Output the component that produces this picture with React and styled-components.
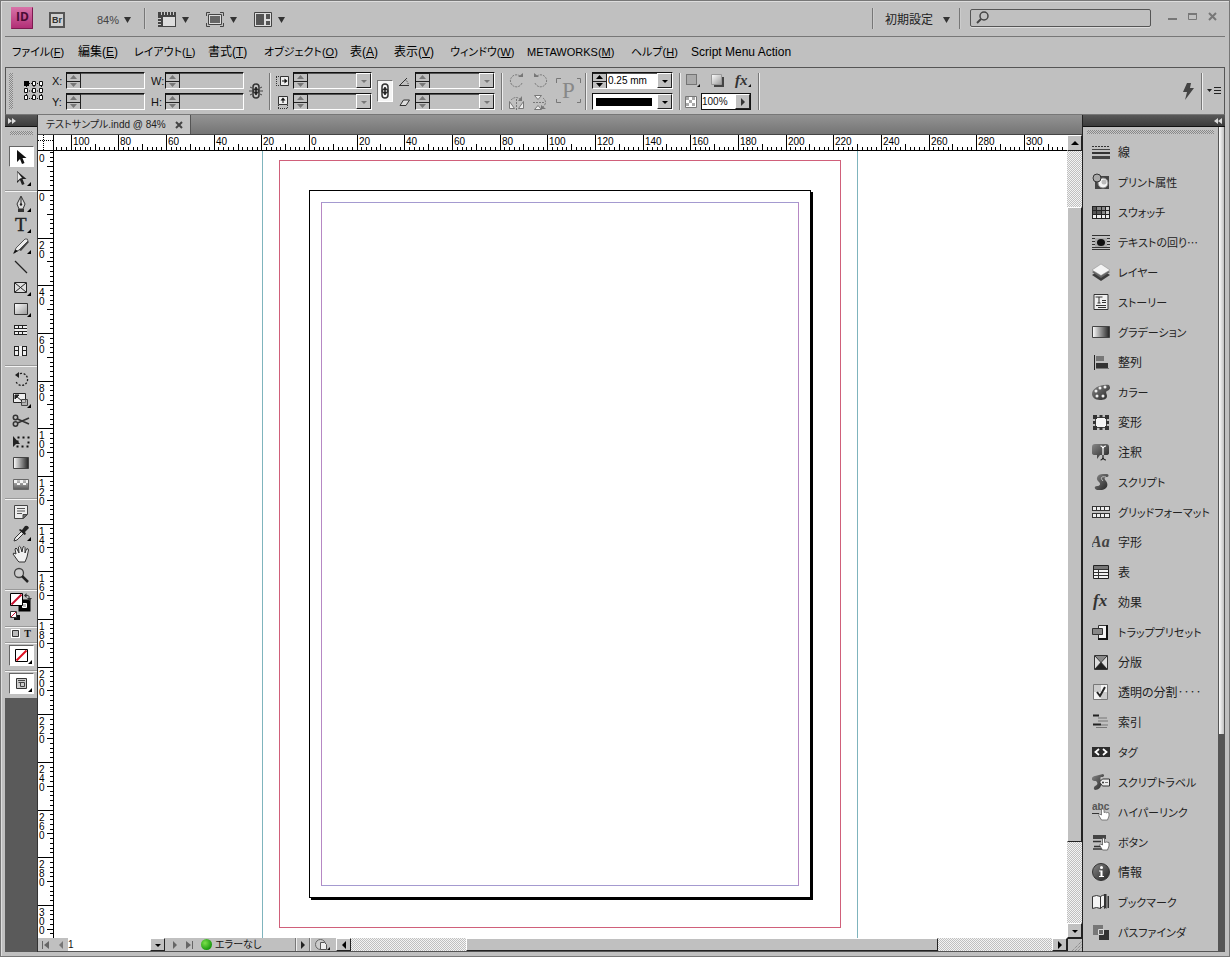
import React, { useEffect, useState } from "react";
import styled, { createGlobalStyle, css } from "styled-components";

// pixels per millimetre at 84% zoom
const SCALE = 2.383;

const menus = [
  { label: "ファイル", hotkey: "F", small: true },
  { label: "編集", hotkey: "E" },
  { label: "レイアウト", hotkey: "L", small: true },
  { label: "書式", hotkey: "T" },
  { label: "オブジェクト", hotkey: "O", small: true },
  { label: "表", hotkey: "A" },
  { label: "表示", hotkey: "V" },
  { label: "ウィンドウ", hotkey: "W", small: true },
  { label: "METAWORKS", hotkey: "M", small: true },
  { label: "ヘルプ", hotkey: "H", small: true },
  { label: "Script Menu Action" },
];

const panelIcons = {
  stroke: (
    <>
      <path d="M0 3.500h18" stroke="#333" strokeDasharray="2 1" />
      <path d="M0 6.500h18" stroke="#444" />
      <path d="M0 10h18" stroke="#333" strokeWidth="2" />
      <path d="M0 14.500h18" stroke="#444" strokeWidth="3" />
    </>
  ),
  print: (
    <>
      <path d="M3 3h14v13H3z" fill="#444" />
      <circle cx="11" cy="10" r="5" fill="#f4f4f4" stroke="#888" />
      <circle cx="12" cy="9" r="2.500" fill="#bbb" />
      <circle cx="5" cy="5" r="4" fill="#aaa" stroke="#333" />
    </>
  ),
  swatch: (
    <>
      <path d="M0 3h18v13H0z" fill="#222" />
      <path d="M1 4h3v3H1zM1 8h3v3H1zM5 8h4v3H5z" fill="#555" />
      <path d="M5 4h4v3H5zM10 4h3v3h-3zM10 8h3v3h-3z" fill="#888" />
      <path d="M14 4h3v3h-3zM14 8h3v3h-3z" fill="#ccc" />
      <path d="M1 12h3v3H1zM5 12h4v3H5zM10 12h3v3h-3zM14 12h3v3h-3z" fill="#eee" />
    </>
  ),
  wrap: (
    <>
      <path
        d="M0 2.500h18M0 5.500h18M0 8.500h3M15 8.500h3M0 11.500h3M15 11.500h3M0 14.500h18M0 16.500h18"
        stroke="#333"
      />
      <path d="M3 5h12v9H3z" fill="#aaa" />
      <ellipse cx="9" cy="9.500" rx="4" ry="3.500" fill="#111" />
    </>
  ),
  layers: (
    <>
      <path d="M9 6l9 6-9 6-9-6z" fill="#3c3c3c" />
      <path d="M9 4l9 5-9 6-9-6z" fill="#666" />
      <path d="M9 1l9 6-9 5.500L0 7z" fill="#f4f4f4" stroke="#888" strokeWidth=".5" />
    </>
  ),
  story: (
    <>
      <path d="M2 1.500h14v15H2z" fill="#f0f0f0" stroke="#333" />
      <path d="M3.500 4h7M7 4v6M5.500 10h3M10 7.500h4M10 9.500h4M4 12.500h10M6 14.500h8" stroke="#333" />
    </>
  ),
  gradient: <path d="M.5 3.500h17v11H.5z" fill="url(#grayRamp)" stroke="#444" />,
  align: (
    <>
      <path d="M2.500 2v15" stroke="#222" />
      <path d="M4 3h8v5H4z" fill="#777" />
      <path d="M4 10h12v5H4z" fill="#333" />
      <path d="M4 15.500h13" stroke="#777" />
    </>
  ),
  color: (
    <>
      <path
        d="M17 2c2 3 1 5-2 6-2 1 0 3 0 5 0 3-3 4-7 4-5 0-8-3-8-6 0-6 9-10 17-9z"
        fill="url(#darkBall)"
      />
      <g fill="#eee">
        <circle cx="4" cy="8" r="1.500" />
        <circle cx="8" cy="5" r="1.500" />
        <circle cx="13" cy="4" r="1.500" />
        <circle cx="5" cy="13" r="1.500" />
        <circle cx="11" cy="13" r="1.500" />
      </g>
    </>
  ),
  transform: (
    <>
      <path d="M3.500 4.500h11v10h-11z" fill="#f4f4f4" stroke="#444" />
      <path
        d="M1 2h4v4H1zM13 2h4v4h-4zM1 13h4v4H1zM13 13h4v4h-4zM7.500 2h3v3h-3zM7.500 14h3v3h-3zM1 8h3v3H1zM14 8h3v3h-3z"
        fill="#333"
      />
    </>
  ),
  note: (
    <>
      <path d="M3 1h11q3 0 3 3v6q0 2-3 2H8l-3 4V12H3q-3 0-3-2V4q0-3 3-3z" fill="url(#darkBall)" />
      <path d="M8.500 3q2 0 2.500 2.500Q11.500 3 14 3M11 5v7" stroke="#fff" strokeWidth="1.200" fill="none" />
      <path d="M11 12v3M8.500 17q2 0 2.500-2.500 .5 2.500 3 2.500" stroke="#222" strokeWidth="1.200" fill="none" />
    </>
  ),
  script: (
    <>
      <path
        d="M15 1c2 0 2 3 0 3-3 0-3 2-1 4 3 4 1 8-4 9H5c-3-1-3-4 0-4 3 0 4-2 2-4-4-3-2-8 4-8z"
        fill="url(#darkBall)"
      />
      <path d="M14 4c-5-1-6 1-3 4" stroke="#bbb" fill="none" />
    </>
  ),
  grid: (
    <>
      <path d="M0 3h18v5H0zM0 10h18v5H0z" fill="#333" />
      <path
        d="M1 4h3v3H1zM5 4h3v3H5zM9 4h3v3H9zM13 4h4v3h-4zM1 11h3v3H1zM5 11h3v3H5zM9 11h3v3H9zM13 11h4v3h-4z"
        fill="#eee"
      />
    </>
  ),
  glyph: (
    <text x="-1" y="14" fontSize="16" fontFamily="Liberation Serif, serif" fontStyle="italic" fontWeight="bold" fill="#444">
      Aa
    </text>
  ),
  table: (
    <>
      <path d="M1.500 2.500h15v13h-15z" fill="#f4f4f4" stroke="#222" />
      <path d="M2 3h14v3H2z" fill="#777" />
      <path d="M2 6.500h14M2 9.500h14M2 12.500h14M6.500 6v9" stroke="#333" />
    </>
  ),
  fx: (
    <text x="1" y="13" fontSize="17" fontFamily="Liberation Serif, serif" fontStyle="italic" fontWeight="bold" fill="#333">
      fx
    </text>
  ),
  trap: (
    <>
      <path d="M6.500 2.500h9v13h-9z" fill="#f4f4f4" stroke="#333" />
      <path d="M15 2v14H6" stroke="#111" strokeWidth="2" fill="none" />
      <path d="M.5 5.500h10v6H.5z" fill="#888" stroke="#333" />
    </>
  ),
  separation: (
    <>
      <path d="M2.500 2.500h13v14h-13z" fill="#ddd" />
      <path d="M3 3h12L9 9z" fill="#888" />
      <path d="M3 16h12L9 9z" fill="#222" />
      <path d="M2.500 2.500h13v14h-13zM3 3l12 13M15 3L3 16" stroke="#333" fill="none" />
    </>
  ),
  flatten: (
    <>
      <path d="M1.500 1.500h14v15h-14z" fill="#f4f4f4" stroke="#777" />
      <path d="M2 2h7v7H2zM9 9h6v7H9z" fill="#ccc" />
      <path d="M5 9l3 4 5-9" stroke="#222" strokeWidth="2" fill="none" />
    </>
  ),
  index: (
    <>
      <path d="M1 2.500h6M1 11.500h8" stroke="#222" strokeWidth="2" />
      <path d="M6 5h9M6 8h10M9 12h7M4 14.500h11" stroke="#777" />
    </>
  ),
  tag: (
    <>
      <path d="M0 4h18v10H0z" fill="#2c2c2c" />
      <path d="M7 6L3.500 9 7 12M11 6l3.500 3L11 12" stroke="#fff" strokeWidth="1.800" fill="none" />
    </>
  ),
  scriptLabel: (
    <>
      <path d="M11 1c2 1 1 3-1 3-3 0-1 3-1 5 1 5-2 8-6 8-2-1-1-3 0-4 3-1 3-3 1-5-6 0-5-4-1-5z" fill="url(#darkBall)" />
      <path d="M7.500 9l3-3h7v7h-7z" fill="#eee" stroke="#333" />
      <circle cx="11" cy="9.500" r="1" fill="#333" />
      <path d="M13 9.500h3" stroke="#777" />
    </>
  ),
  hyperlink: (
    <>
      <text x="0" y="7" fontSize="10" fontFamily="Liberation Sans, sans-serif" fontWeight="bold" fill="#555">
        abc
      </text>
      <path d="M0 10.500h7" stroke="#333" />
      <path
        d="M9.500 6v6l-2-1-1 1 3 5h6l1.500-4V10l-1.500-.5-1 .5-1-1-1.500.5V6z"
        fill="#fff"
        stroke="#666"
        strokeWidth=".8"
      />
    </>
  ),
  button: (
    <>
      <path d="M1 2h13v4H1z" fill="#444" />
      <path d="M1 8.500h8M2 13.500h7M1 16h9" stroke="#333" strokeWidth="1.500" />
      <path
        d="M10.500 5v7l-2-1-1 1 3 5h5l1.500-4V9.500L14.500 9l-2 .5V5z"
        fill="#fff"
        stroke="#555"
        strokeWidth=".8"
      />
    </>
  ),
  info: (
    <>
      <circle cx="9" cy="9" r="8.500" fill="url(#darkBall)" stroke="#333" />
      <circle cx="9.500" cy="4.500" r="1.500" fill="#fff" />
      <path d="M7 7.500h3.500V13H12v1H7v-1h1.500V8.500H7z" fill="#fff" />
    </>
  ),
  bookmark: (
    <>
      <path d="M.5 3.500q4-2 8 0v12q-4-2-8 0z" fill="#f4f4f4" stroke="#333" />
      <path d="M8.500 3.500q2-1.500 4-1.500v11q-2 0-4 2.500z" fill="#f4f4f4" stroke="#333" />
      <path d="M12 1h2.500v15l-1-1-1.500 1zM15.500 3H17v12h-1.500z" fill="#333" />
    </>
  ),
  pathfinder: (
    <>
      <path d="M1 2h10v10H1z" fill="#777" />
      <path d="M7 7h10v10H7z" fill="#333" />
      <path d="M6.500 6.500h5v5h-5z" fill="#666" stroke="#ddd" />
    </>
  ),
};

const panels = [
  { icon: "stroke", label: "線" },
  { icon: "print", label: "プリント属性", small: true },
  { icon: "swatch", label: "スウォッチ", small: true },
  { icon: "wrap", label: "テキストの回り…", small: true },
  { icon: "layers", label: "レイヤー", small: true },
  { icon: "story", label: "ストーリー", small: true },
  { icon: "gradient", label: "グラデーション", small: true },
  { icon: "align", label: "整列" },
  { icon: "color", label: "カラー", small: true },
  { icon: "transform", label: "変形" },
  { icon: "note", label: "注釈" },
  { icon: "script", label: "スクリプト", small: true },
  { icon: "grid", label: "グリッドフォーマット", small: true },
  { icon: "glyph", label: "字形" },
  { icon: "table", label: "表" },
  { icon: "fx", label: "効果" },
  { icon: "trap", label: "トラッププリセット", small: true },
  { icon: "separation", label: "分版" },
  { icon: "flatten", label: "透明の分割‥‥" },
  { icon: "index", label: "索引" },
  { icon: "tag", label: "タグ", small: true },
  { icon: "scriptLabel", label: "スクリプトラベル", small: true },
  { icon: "hyperlink", label: "ハイパーリンク", small: true },
  { icon: "button", label: "ボタン", small: true },
  { icon: "info", label: "情報" },
  { icon: "bookmark", label: "ブックマーク", small: true },
  { icon: "pathfinder", label: "パスファインダ", small: true },
];

const toolGroups = [
  [
    {
      name: "選択",
      active: true,
      icon: <path d="M5 2v12l3-3 2 5 2.500-1-2-5h4z" fill="#111" />,
    },
    {
      name: "ダイレクト選択",
      more: true,
      icon: (
        <>
          <path d="M5 2v12l3-3 2 5 2.500-1-2-5h4z" fill="#222" />
          <path d="M5.500 3v9L8 9.500l2-.5z" fill="#eee" />
        </>
      ),
    },
  ],
  [
    {
      name: "ペン",
      more: true,
      icon: (
        <>
          <path d="M9 1L5 9l2 5h4l2-5z" fill="#ddd" stroke="#333" />
          <path d="M9 2v7" stroke="#222" />
          <circle cx="9" cy="9.500" r="1.200" fill="#222" />
          <path d="M6 14h6v3H6z" fill="#333" />
        </>
      ),
    },
    {
      name: "文字",
      more: true,
      icon: (
        <text x="3" y="15" fontSize="19" fontFamily="Liberation Serif, serif" fill="#222" stroke="#222" strokeWidth=".4">
          T
        </text>
      ),
    },
    {
      name: "鉛筆",
      more: true,
      icon: (
        <>
          <path d="M2 16l2-5L13 2q3-1 3 2L7 13z" fill="#eee" stroke="#555" />
          <path d="M7 13L16 4l1 1-8 9z" fill="#444" />
          <path d="M1 17l2.500-4.500L6 14z" fill="#111" />
        </>
      ),
    },
    { name: "線", icon: <path d="M3 3l12 12" stroke="#222" strokeWidth="1.300" /> },
    {
      name: "長方形フレーム",
      more: true,
      icon: (
        <>
          <path d="M2.500 3.500h12v10h-12z" fill="#ddd" stroke="#222" />
          <path d="M3 4l11 9M14 4L3 13" stroke="#222" />
        </>
      ),
    },
    {
      name: "長方形",
      more: true,
      icon: <path d="M2.500 3.500h13v11h-13z" fill="url(#lightRamp)" stroke="#333" />,
    },
    {
      name: "横組みグリッド",
      icon: (
        <>
          <path d="M3 4h12v10H3z" fill="#eee" />
          <path
            d="M2 4.500h13M2 7.500h13M2 10.500h13M2 13.500h13M2.500 4v4M2.500 10v4M6.500 4v4M10.500 4v4M6.500 10v4M10.500 10v4"
            stroke="#222"
          />
        </>
      ),
    },
    {
      name: "縦組みグリッド",
      icon: (
        <>
          <path d="M2 4h13v10H2z" fill="#eee" />
          <path
            d="M2.500 4v10M6.500 4v10M10.500 4v10M14.500 4v10M2 4.500h5M10 4.500h5M2 8.500h5M10 8.500h5M2 13.500h5M10 13.500h5"
            stroke="#222"
          />
        </>
      ),
    },
  ],
  [
    {
      name: "回転",
      icon: (
        <>
          <path d="M5 5.500a6 6 0 1 1-1 6" stroke="#222" strokeWidth="1.300" strokeDasharray="2 1.500" fill="none" />
          <path d="M7 2L3 5l4 3z" fill="#222" />
        </>
      ),
    },
    {
      name: "拡大・縮小",
      more: true,
      icon: (
        <>
          <path d="M1.500 2.500h12v9h-12z" fill="#eee" stroke="#222" />
          <path d="M9.500 8.500h6v6h-6z" fill="#aaa" fillOpacity=".6" stroke="#444" />
          <path d="M3 4h4L3 8zM4 5l6 5" fill="#222" stroke="#222" />
        </>
      ),
    },
    {
      name: "はさみ",
      icon: (
        <g fill="none" stroke="#333">
          <circle cx="3.500" cy="5.500" r="2.200" strokeWidth="1.500" />
          <circle cx="3.500" cy="12" r="2.200" strokeWidth="1.500" />
          <path d="M5.500 7L17 12M5.500 11L17 6" strokeWidth="1.600" />
        </g>
      ),
    },
    {
      name: "自由変形",
      icon: (
        <>
          <path d="M5.500 4.500h11v9h-11z" fill="none" stroke="#111" strokeWidth="2" strokeDasharray="2 3" />
          <path d="M1 3v11l3-3h4z" fill="#222" />
        </>
      ),
    },
    { name: "グラデーション", icon: <path d="M1.500 3.500h15v11h-15z" fill="url(#grayRamp)" stroke="#444" /> },
    {
      name: "グラデーションぼかし",
      icon: (
        <>
          <path d="M1.500 4.500h15v10h-15z" fill="url(#downRamp)" stroke="#666" />
          <path d="M2 5h3v3H2zM8 5h3v3H8zM14 5h2v3h-2zM5 8h3v2H5zM11 8h3v2h-3z" fill="#f4f4f4" />
        </>
      ),
    },
  ],
  [
    {
      name: "注釈",
      icon: (
        <>
          <path d="M2.500 2.500h13v9l-4 4h-9z" fill="#eee" stroke="#444" />
          <path d="M5 5.500h8M5 8h8M5 10.500h5" stroke="#555" />
          <path d="M15 11.500h-4v4z" fill="#777" stroke="#444" />
        </>
      ),
    },
    {
      name: "スポイト",
      more: true,
      icon: (
        <>
          <path d="M3 14L10 7l2 2-7 7-3 1z" fill="#eee" stroke="#333" />
          <path d="M8 5l2 1 3-4q3-1 4 2l-4 4 1 2-1.500 1L7 6z" fill="#222" />
        </>
      ),
    },
    {
      name: "手のひら",
      icon: (
        <path
          d="M6 16l-5-7q0-2 3 0L3 4q1-2 2 0l2 4-.5-6q1-1.500 2 0L10 7l1-5q1-1.500 2 .5V8l1.500-4q2-1 2 1L15 12l-2 5H7z"
          fill="#f0f0f0"
          stroke="#333"
        />
      ),
    },
    {
      name: "ズーム",
      icon: (
        <>
          <circle cx="7" cy="7" r="4.500" fill="#ccc" stroke="#444" strokeWidth="1.300" />
          <path d="M10 10l6 6" stroke="#222" strokeWidth="2.500" />
        </>
      ),
    },
  ],
];

function useWindowSize() {
  const [size, setSize] = useState({ width: window.innerWidth, height: window.innerHeight });

  useEffect(() => {
    const onResize = () => setSize({ width: window.innerWidth, height: window.innerHeight });
    window.addEventListener("resize", onResize);
    return () => window.removeEventListener("resize", onResize);
  }, []);

  return size;
}

function Caret() {
  return (
    <svg width="7" height="6" viewBox="0 0 7 6">
      <path d="M0 0h7L3.500 6z" fill="#333" />
    </svg>
  );
}

function Triangle({ dir = "down", color = "#000" }) {
  const shapes = {
    up: "M0 6L4 2l4 4z",
    down: "M1 3h6L4 6z",
    left: "M6 0v8L2 4z",
    right: "M2 0v8l4-4z",
  };
  return (
    <svg width="8" height="8" viewBox="0 0 8 8">
      <path d={shapes[dir]} fill={color} />
    </svg>
  );
}

function Spinner({ dim }) {
  const color = dim ? "#777" : "#000";
  return (
    <SpinnerBox>
      <button type="button" aria-label="増やす">
        <svg width="7" height="4">
          <path d="M0 4L3.500 0 7 4z" fill={color} />
        </svg>
      </button>
      <button type="button" aria-label="減らす">
        <svg width="7" height="4">
          <path d="M0 0l3.500 4L7 0z" fill={color} />
        </svg>
      </button>
    </SpinnerBox>
  );
}

function NumberField({ id, value = "", width = 79, combo, light }) {
  return (
    <FieldBox $width={width} $light={light}>
      <Spinner dim={!light} />
      <input id={id} type="text" aria-label={id} defaultValue={value} />
      {combo && (
        <DropButton type="button" aria-label="候補">
          <Triangle color={light ? "#000" : "#777"} />
        </DropButton>
      )}
    </FieldBox>
  );
}

function TitleBar() {
  return (
    <TitleRow>
      <svg width="22" height="22" viewBox="0 0 22 22">
        <defs>
          <linearGradient id="pinkRamp" x1="0" y1="0" x2="0" y2="1">
            <stop offset="0" stopColor="#d873a8" />
            <stop offset="1" stopColor="#b02c74" />
          </linearGradient>
          <linearGradient id="grayRamp">
            <stop offset="0" stopColor="#fff" />
            <stop offset="1" stopColor="#222" />
          </linearGradient>
          <linearGradient id="lightRamp" x1="0" y1="0" x2="1" y2="1">
            <stop offset="0" stopColor="#fff" />
            <stop offset="1" stopColor="#999" />
          </linearGradient>
          <linearGradient id="downRamp" x1="0" y1="0" x2="0" y2="1">
            <stop offset="0" stopColor="#ccc" />
            <stop offset="1" stopColor="#555" />
          </linearGradient>
          <linearGradient id="darkBall" x1="0" y1="0" x2="1" y2="1">
            <stop offset="0" stopColor="#888" />
            <stop offset="1" stopColor="#222" />
          </linearGradient>
        </defs>
        <path d="M0 0h22v22H0z" fill="url(#pinkRamp)" />
        <path d="M.5 21.500h21V.5" stroke="#7d1a50" fill="none" />
        <text x="5" y="14" fontSize="12" fontFamily="Open Sans, sans-serif" fontWeight="bold" fill="#4a0c34">
          ID
        </text>
      </svg>
      <BridgeButton type="button">Br</BridgeButton>
      <ZoomSelect>
        <select aria-label="ズームレベル" defaultValue="84%">
          <option>84%</option>
        </select>
        <Caret />
      </ZoomSelect>
      <TitleDivider />
      <ViewButton type="button" aria-label="表示オプション">
        <svg width="19" height="16" viewBox="0 0 19 16">
          <path d="M0 0h18v15H0z" fill="#444" />
          <path d="M5 5h12v9H5z" fill="#ddd" />
          <path d="M3.500 0v3M6.500 0v3M9.500 0v3M12.500 0v3M15.500 0v3M0 6.500h3M0 9.500h3M0 12.500h3" stroke="#ccc" />
        </svg>
        <Caret />
      </ViewButton>
      <ViewButton type="button" aria-label="スクリーンモード">
        <svg width="19" height="16" viewBox="0 0 19 16">
          <path d="M.5 4V.5H4M14 .5h3.500V4M17.500 11v3.500H14M4 14.500H.5V11" stroke="#444" fill="none" />
          <path d="M2.500 2.500h13v10h-13z" fill="#ddd" stroke="#444" />
          <path d="M4 4h10v7H4z" fill="#666" />
        </svg>
        <Caret />
      </ViewButton>
      <ViewButton type="button" aria-label="ドキュメントレイアウト">
        <svg width="19" height="16" viewBox="0 0 19 16">
          <path d="M.5 .5h17v14H.5z" fill="#ddd" stroke="#444" />
          <path d="M2 2h8v11H2zM12 2h4v5h-4zM12 9h4v4h-4z" fill="#555" />
        </svg>
        <Caret />
      </ViewButton>
      <Spacer />
      <TitleDivider />
      <WorkspaceSelect>
        <select aria-label="ワークスペース" defaultValue="初期設定">
          <option>初期設定</option>
        </select>
        <Caret />
      </WorkspaceSelect>
      <TitleDivider />
      <SearchBox>
        <svg width="13" height="13" viewBox="0 0 13 13">
          <circle cx="8" cy="5" r="4" fill="none" stroke="#444" strokeWidth="1.500" />
          <path d="M5 8l-4 4" stroke="#444" strokeWidth="2" />
        </svg>
        <input type="text" aria-label="検索" />
      </SearchBox>
      <WindowControls>
        <button type="button" aria-label="最小化">
          <svg width="10" height="10">
            <path d="M0 7h9" stroke="#777" strokeWidth="2" />
          </svg>
        </button>
        <button type="button" aria-label="最大化">
          <svg width="10" height="10">
            <path d="M.5 2.500h8v5h-8z" stroke="#777" fill="none" />
            <path d="M0 2h9" stroke="#777" strokeWidth="2" />
          </svg>
        </button>
        <button type="button" aria-label="閉じる">
          <svg width="10" height="10">
            <path d="M1 1l7 7M8 1L1 8" stroke="#777" strokeWidth="2" />
          </svg>
        </button>
      </WindowControls>
    </TitleRow>
  );
}

function MenuBar() {
  return (
    <MenuRow>
      {menus.map((menu) => (
        <MenuButton type="button" key={menu.label} $small={menu.small}>
          {menu.label}
          {menu.hotkey && (
            <>
              (<u>{menu.hotkey}</u>)
            </>
          )}
        </MenuButton>
      ))}
    </MenuRow>
  );
}

function ChainIcon({ broken }) {
  return (
    <svg width="14" height="16" viewBox="0 0 14 16">
      <g fill="none" stroke="#333" strokeWidth="1.500">
        <rect x="4" y="1" width="6" height="9" rx="3" />
        <rect x="4" y="6" width="6" height="9" rx="3" />
      </g>
      <path d="M7 4v8" stroke="#111" strokeWidth="1.500" />
      {broken && (
        <path d="M0 8h3M11 8h3M1 4l2 1M13 4l-2 1M1 12l2-1M13 12l-2-1" stroke="#444" />
      )}
    </svg>
  );
}

function ControlPanel() {
  return (
    <ControlRow>
      <VerticalGrip />
      <svg width="20" height="20" viewBox="0 0 20 20">
        <path d="M3 2.500h14M3 10h14M3 17.500h14M2.500 3v14M10 3v14M17.500 3v14" stroke="#111" strokeDasharray="1 1" />
        <path
          d="M8.500.5h3v4h-3zM15.500.5h3v4h-3zM.5 7.500h3v4h-3zM8.500 7.500h3v4h-3zM15.500 7.500h3v4h-3zM.5 14.500h3v4h-3zM8.500 14.500h3v4h-3zM15.500 14.500h3v4h-3z"
          fill="#fff"
          stroke="#111"
        />
        <path d="M0 0h5v5H0z" fill="#000" />
      </svg>
      <FieldGrid $label={14} $gap={8}>
        <label htmlFor="pos-x">X:</label>
        <NumberField id="pos-x" />
        <label htmlFor="pos-y">Y:</label>
        <NumberField id="pos-y" />
      </FieldGrid>
      <FieldGrid $label={14} $gap={6}>
        <label htmlFor="size-w">W:</label>
        <NumberField id="size-w" />
        <label htmlFor="size-h">H:</label>
        <NumberField id="size-h" />
      </FieldGrid>
      <PlainButton type="button" aria-label="縦横比" $gap={5}>
        <ChainIcon broken />
      </PlainButton>
      <Divider />
      <FieldGrid $label={17} $gap={5}>
        <svg width="14" height="14" viewBox="0 0 14 14">
          <path d="M4.500 2.500h8v9h-8z" fill="#eee" stroke="#333" />
          <path d="M0 2.500h4M0 11.500h4M.5 3v8" stroke="#333" strokeDasharray="1 1" />
          <path d="M6 7h3" stroke="#111" />
          <path d="M8.500 4.500v5L11.500 7z" fill="#111" />
        </svg>
        <NumberField id="scale-x" combo />
        <svg width="14" height="14" viewBox="0 0 14 14">
          <path d="M2.500 1.500h9v8h-9z" fill="#eee" stroke="#333" />
          <path d="M2.500 10v4M11.500 10v4M2 13.500h10" stroke="#333" strokeDasharray="1 1" />
          <path d="M7 5v3" stroke="#111" />
          <path d="M4.500 5.500h5L7 2.500z" fill="#111" />
        </svg>
        <NumberField id="scale-y" combo />
      </FieldGrid>
      <ChainToggle type="button" aria-label="拡大縮小を固定">
        <ChainIcon />
      </ChainToggle>
      <FieldGrid $label={16} $gap={6}>
        <svg width="12" height="12" viewBox="0 0 12 12">
          <path d="M0 10.500h10M1 10L8 3" stroke="#333" fill="none" />
          <path d="M6.500 5q3 2 2.500 5" stroke="#333" strokeDasharray="1 1" fill="none" />
        </svg>
        <NumberField id="rotation" width={80} combo />
        <svg width="12" height="12" viewBox="0 0 12 12">
          <path d="M1 9.500L4.500 4h6L7 9.500z" stroke="#333" fill="#ddd" />
        </svg>
        <NumberField id="shear" width={80} combo />
      </FieldGrid>
      <Divider />
      <IconGrid>
        <svg width="15" height="15" viewBox="0 0 15 15">
          <path d="M11 3a6 6 0 1 0 2 7" stroke="#777" fill="none" strokeDasharray="2 1" />
          <path d="M9 4h5V0z" fill="#777" />
        </svg>
        <svg width="15" height="15" viewBox="0 0 15 15">
          <path d="M4 3a6 6 0 1 1-2 7" stroke="#777" fill="none" strokeDasharray="2 1" />
          <path d="M6 4H1V0z" fill="#777" />
        </svg>
        <svg width="15" height="15" viewBox="0 0 15 15">
          <path d="M.5 13.500v-7l5 7zM14.500 13.500v-7l-5 7z" fill="#eee" stroke="#777" />
          <path d="M2 5q5-5 10 0M7.500 4v11" stroke="#777" fill="none" strokeDasharray="2 1" />
          <path d="M13 1v5H9z" fill="#777" />
        </svg>
        <svg width="15" height="15" viewBox="0 0 15 15">
          <path d="M1.500.5h7l-3.500 4zM1.500 14.500h7l-3.500-4z" fill="#eee" stroke="#777" />
          <path d="M10 3q5 4 0 9M0 7.500h12" stroke="#777" fill="none" strokeDasharray="2 1" />
          <path d="M8 10v4h5z" fill="#777" />
        </svg>
      </IconGrid>
      <ParagraphMark>
        <svg width="26" height="26" viewBox="0 0 26 26">
          <path d="M.5 5V.5H5M21 .5h3.500V5M24.500 21v3.500H21M5 24.500H.5V21" stroke="#777" fill="none" />
          <text x="6" y="20" fontSize="23" fontFamily="Liberation Serif, serif" fill="#888">
            P
          </text>
        </svg>
      </ParagraphMark>
      <Divider $tight />
      <StrokeStack>
        <NumberField id="stroke-weight" value="0.25 mm" width={81} combo light />
        <StrokeStyle>
          <StrokePreview />
          <DropButton type="button" aria-label="線種">
            <Triangle />
          </DropButton>
        </StrokeStyle>
      </StrokeStack>
      <Divider />
      <EffectStack>
        <EffectRow $gap={9}>
          <svg width="16" height="15" viewBox="0 0 16 15">
            <path d="M1.500 1.500h10v10h-10z" fill="#aaa" stroke="#333" strokeDasharray="1 1" />
            <path d="M15 11v3h-3z" fill="#111" />
          </svg>
          <svg width="15" height="15" viewBox="0 0 15 15">
            <path d="M4 4h10v10H4z" fill="#444" />
            <path d="M1.500 1.500h10v10h-10z" fill="url(#lightRamp)" stroke="#999" />
          </svg>
          <svg width="18" height="15" viewBox="0 0 18 15">
            <text x="1" y="12" fontSize="15" fontFamily="Liberation Serif, serif" fontStyle="italic" fontWeight="bold" fill="#333">
              fx
            </text>
            <path d="M17 11v3h-3z" fill="#111" />
          </svg>
        </EffectRow>
        <EffectRow $gap={4}>
          <svg width="12" height="12" viewBox="0 0 12 12">
            <path d="M.5 .5h11v11H.5z" fill="#fff" stroke="#777" />
            <path d="M1 1h3v3H1zM7 1h3v3H7zM4 4h3v3H4zM1 7h3v3H1zM7 7h3v3H7z" fill="#aaa" />
          </svg>
          <OpacityField>
            <input type="text" aria-label="不透明度" defaultValue="100%" />
            <DropButton type="button" aria-label="不透明度スライダ">
              <Triangle dir="right" color="#333" />
            </DropButton>
          </OpacityField>
        </EffectRow>
      </EffectStack>
      <Divider />
      <Spacer />
      <PlainButton type="button" aria-label="クイック適用" $gap={0}>
        <svg width="13" height="17" viewBox="0 0 13 17">
          <path d="M5 0L1 9h4l-2 8L12 5H8l1-5z" fill="#444" />
        </svg>
      </PlainButton>
      <Divider />
      <PlainButton type="button" aria-label="パネルメニュー" $gap={4}>
        <svg width="16" height="10" viewBox="0 0 16 10">
          <path d="M0 3h5L2.500 6z" fill="#222" />
          <path d="M7 1.500h7M7 4.500h7M7 7.500h7" stroke="#222" />
        </svg>
      </PlainButton>
    </ControlRow>
  );
}

function ToolBox() {
  return (
    <ToolColumn>
      <DarkHeader>
        <svg width="8" height="6" viewBox="0 0 8 6">
          <path d="M0 0v6l4-3zM4 0v6l4-3z" fill="#ddd" />
        </svg>
      </DarkHeader>
      <ToolPanel>
        <ToolGrip />
        {toolGroups.map((group, i) => (
          <ToolGroup key={i}>
            {group.map((tool) => (
              <ToolButton type="button" key={tool.name} aria-label={tool.name} $active={tool.active}>
                <svg width="23" height="19" viewBox="-2 -1 23 19">
                  {tool.icon}
                  {tool.more && <path d="M19 13v4h-4z" fill="#000" />}
                </svg>
              </ToolButton>
            ))}
          </ToolGroup>
        ))}
        <ToolGroup>
          <svg width="25" height="30" viewBox="0 0 25 30">
            <path d="M9.500 7.500h12v12h-12z" fill="#000" />
            <path d="M13.500 11.500h4v4h-4z" fill="#c0c0c0" stroke="#fff" />
            <path d="M1.500 1.500h12v12h-12z" fill="#fff" stroke="#000" />
            <path d="M2.500 12.500l10-10" stroke="#c8102e" strokeWidth="2" />
            <path d="M16 3.500q5-1 4 3" stroke="#333" fill="none" />
            <path d="M18 6h5l-2.500 3zM15 3.500L17.500 1v5z" fill="#333" />
            <path d="M5 23h6v5H5z" fill="#111" />
            <path d="M1.500 19.500h6v6h-6z" fill="#fff" stroke="#333" />
            <path d="M2 25l5-5" stroke="#c8102e" />
          </svg>
        </ToolGroup>
        <ToolGroup>
          <FormatRow>
            <svg width="9" height="9" viewBox="0 0 9 9">
              <path d="M0 0h9v9H0z" fill="#fff" />
              <path d="M1.500 1.500h6v6h-6z" fill="#bbb" stroke="#333" />
            </svg>
            <b>T</b>
          </FormatRow>
        </ToolGroup>
        <ToolGroup>
          <ToolButton type="button" aria-label="適用なし" $active>
            <svg width="23" height="19" viewBox="0 0 23 19">
              <path d="M5.500 3.500h12v12h-12z" fill="#fff" stroke="#000" />
              <path d="M6.500 14.500l10-10" stroke="#e01020" strokeWidth="2" />
              <path d="M22 14v4h-4z" fill="#000" />
            </svg>
          </ToolButton>
        </ToolGroup>
        <ToolGroup>
          <ToolButton type="button" aria-label="標準モード" $active>
            <svg width="23" height="19" viewBox="0 0 23 19">
              <path d="M6.500 4.500h10v10h-10z" fill="#ccc" stroke="#333" />
              <path d="M8 6.500h7M8.500 8.500h6v4h-4v-4" fill="none" stroke="#444" />
              <path d="M22 14v4h-4z" fill="#000" />
            </svg>
          </ToolButton>
        </ToolGroup>
      </ToolPanel>
    </ToolColumn>
  );
}

function range(from, to) {
  const values = [];
  for (let mm = from; mm <= to; mm += 2) values.push(mm);
  return values;
}

function TopRuler() {
  const { width } = useWindowSize();
  const last = Math.floor((width - 480) / SCALE);

  return (
    <RulerTop>
      <svg width="100%" height="15">
        {range(-106, last + 66).map((mm) => {
          const x = 255 + Math.round(mm * SCALE);
          if (x > width - 164) return null;
          const major = mm % 20 === 0;
          const top = major ? 0 : mm % 10 === 0 ? 9 : 12;
          return (
            <g key={mm}>
              <rect x={x} y={top} width="1" height={15 - top} />
              {major && x < width - 184 && (
                <text x={x + 2} y="10">
                  {Math.abs(mm)}
                </text>
              )}
            </g>
          );
        })}
      </svg>
    </RulerTop>
  );
}

function SideRuler() {
  const { height } = useWindowSize();
  const bottom = Math.max(height, 957) - 171;

  return (
    <RulerSide>
      <svg width="15" height="100%">
        {range(-20, Math.floor((bottom - 39) / SCALE)).map((mm) => {
          const y = 39 + Math.round(mm * SCALE);
          const major = mm % 20 === 0;
          const left = major ? 0 : mm % 10 === 0 ? 9 : 12;
          return (
            <g key={mm}>
              <rect x={left} y={y} width={15 - left} height="1" />
              {major &&
                String(Math.abs(mm))
                  .split("")
                  .map((digit, i) => ({ digit, base: y + 11 + i * 9 }))
                  .filter(({ base }) => base > 9)
                  .map(({ digit, base }) => (
                    <text key={base} x="1" y={base}>
                      {digit}
                    </text>
                  ))}
            </g>
          );
        })}
      </svg>
    </RulerSide>
  );
}

function StatusBar() {
  return (
    <StatusRow>
      <StepButton type="button" aria-label="最初のページ">
        <svg width="9" height="8" viewBox="0 0 9 8">
          <path d="M1 0h1v8H1zM8 0v8L3 4z" fill="#666" />
        </svg>
      </StepButton>
      <StepButton type="button" aria-label="前のページ">
        <Triangle dir="left" color="#777" />
      </StepButton>
      <PageField>
        <input type="text" aria-label="ページ" defaultValue="1" />
        <DropButton type="button" aria-label="ページ一覧">
          <Triangle />
        </DropButton>
      </PageField>
      <StepButton type="button" aria-label="次のページ">
        <Triangle dir="right" color="#666" />
      </StepButton>
      <StepButton type="button" aria-label="最後のページ">
        <svg width="9" height="8" viewBox="0 0 9 8">
          <path d="M7 0h1v8H7zM1 0v8l5-4z" fill="#666" />
        </svg>
      </StepButton>
      <Preflight>
        <i />
        エラーなし
      </Preflight>
      <StatusCell type="button" aria-label="プリフライトメニュー" $width={14}>
        <Triangle dir="right" color="#222" />
      </StatusCell>
      <StatusCell type="button" aria-label="履歴" $width={27}>
        <svg width="16" height="12" viewBox="0 0 16 12">
          <circle cx="5.500" cy="5.500" r="5" fill="#ccc" stroke="#666" />
          <path d="M5.500 3.500h4l2 2v5h-6z" fill="#eee" stroke="#555" />
          <path d="M15 8v3h-3z" fill="#111" />
        </svg>
      </StatusCell>
      <ScrollButton type="button" aria-label="左へ" $fill>
        <Triangle dir="left" />
      </ScrollButton>
      <HTrack>
        <Thumb />
      </HTrack>
      <ScrollButton type="button" aria-label="右へ" $fill>
        <Triangle dir="right" />
      </ScrollButton>
      <ResizeGrip>
        <svg width="12" height="12" viewBox="0 0 12 12">
          <path d="M2 12L12 2M5 12l7-7M8 12l4-4" stroke="#777" strokeDasharray="1 1" />
        </svg>
      </ResizeGrip>
    </StatusRow>
  );
}

function Document() {
  return (
    <DocumentArea>
      <TabBar>
        <Tab>
          テストサンプル.indd @ 84%
          <button type="button" aria-label="閉じる">
            <svg width="8" height="8">
              <path d="M1 1l6 6M7 1L1 7" stroke="#444" strokeWidth="2" />
            </svg>
          </button>
        </Tab>
      </TabBar>
      <EditorGrid>
        <RulerCorner>
          <svg width="15" height="15">
            <path d="M0 5.500h15M5.500 0v15" stroke="#000" strokeDasharray="1 1" />
          </svg>
        </RulerCorner>
        <TopRuler />
        <ScrollButton type="button" aria-label="上へ" $fill>
          <Triangle dir="up" />
        </ScrollButton>
        <SideRuler />
        <Pasteboard>
          <SlugGuides>
            <BleedFrame>
              <Page>
                <MarginFrame />
              </Page>
            </BleedFrame>
          </SlugGuides>
        </Pasteboard>
        <VScroll>
          <VTrack>
            <Thumb $vertical />
          </VTrack>
          <ScrollButton type="button" aria-label="下へ">
            <Triangle />
          </ScrollButton>
        </VScroll>
      </EditorGrid>
      <StatusBar />
    </DocumentArea>
  );
}

function PanelDock() {
  return (
    <Dock>
      <DarkHeader $right>
        <svg width="8" height="6" viewBox="0 0 8 6">
          <path d="M4 0v6L0 3zM8 0v6L4 3z" fill="#ddd" />
        </svg>
      </DarkHeader>
      <DockBody>
        <PanelList>
          <PanelGrip />
          {panels.map((panel) => (
            <PanelRow type="button" key={panel.icon} $small={panel.small}>
              <svg width="18" height="18" viewBox="0 0 18 18">
                {panelIcons[panel.icon]}
              </svg>
              {panel.label}
            </PanelRow>
          ))}
        </PanelList>
        <DockScroll>
          <span />
        </DockScroll>
      </DockBody>
    </Dock>
  );
}

function App() {
  return (
    <>
      <GlobalStyle />
      <Window>
        <TitleBar />
        <MenuBar />
        <ControlPanel />
        <Workspace>
          <ToolBox />
          <Document />
          <PanelDock />
        </Workspace>
      </Window>
    </>
  );
}

const GlobalStyle = createGlobalStyle`
  * {
    box-sizing: border-box;
  }
  body {
    margin: 0;
    background: #c0c0c0;
    color: #111;
    font-family: "Liberation Sans", "Noto Sans CJK JP", sans-serif;
    font-size: 12px;
    line-height: 16px;
    font-feature-settings: "palt";
  }
  button, input, select {
    margin: 0;
    padding: 0;
    border: 0;
    border-radius: 0;
    background: transparent;
    color: inherit;
    font: inherit;
    font-feature-settings: inherit;
    outline: none;
  }
  select {
    appearance: none;
  }
  svg {
    display: block;
    flex: none;
  }
`;

const checker = css`
  background: repeating-conic-gradient(#c0c0c0 0 25%, #f4f4f4 0 50%) 0 0 / 2px 2px;
`;

const raised = css`
  background: #c0c0c0;
  border: 1px solid;
  border-color: #fff #222 #222 #fff;
`;

const Window = styled.div`
  display: flex;
  flex-direction: column;
  height: 100vh;
  min-height: 957px;
  padding: 0 4px 4px;
  border: 1px solid #777;
  background: #c0c0c0;
  box-shadow: inset 1px 1px 0 #ddd;
`;

const TitleRow = styled.header`
  display: flex;
  align-items: center;
  flex: none;
  height: 36px;
  padding: 0 7px 2px 6px;
  border-bottom: 1px solid #777;
`;

const Spacer = styled.div`
  flex: 1;
`;

const TitleDivider = styled.span`
  width: 2px;
  height: 21px;
  margin-top: 2px;
  border-left: 1px solid #777;
  border-right: 1px solid #ccc;
`;

const BridgeButton = styled.button`
  width: 16px;
  height: 16px;
  margin: 4px 0 0 16px;
  border: 2px solid #555;
  background: #d0d0d0;
  color: #333;
  font-size: 9px;
  font-weight: bold;
  line-height: 12px;
`;

const ZoomSelect = styled.label`
  display: flex;
  align-items: center;
  margin: 4px 13px 0 32px;
  color: #444;
  font-size: 11px;
  select {
    width: 27px;
  }
`;

const WorkspaceSelect = styled.label`
  display: flex;
  align-items: center;
  margin: 4px 9px 0 11px;
  color: #222;
  select {
    width: 58px;
  }
`;

const ViewButton = styled.button`
  display: flex;
  align-items: center;
  gap: 5px;
  width: 31px;
  margin: 4px 5px 0 12px;
`;

const SearchBox = styled.label`
  display: flex;
  align-items: center;
  width: 181px;
  height: 18px;
  margin: 0 17px 0 9px;
  padding-left: 5px;
  border: 1px solid #555;
  border-radius: 2px;
  box-shadow: 0 1px 0 #ddd;
  input {
    flex: 1;
    min-width: 0;
  }
`;

const WindowControls = styled.div`
  display: flex;
  gap: 10px;
  margin-bottom: 2px;
`;

const MenuRow = styled.nav`
  display: grid;
  grid-template-columns: 66px 56px 74px 56px 86px 44px 56px 77px 104px 60px auto;
  align-items: center;
  justify-content: start;
  flex: none;
  height: 30px;
  padding: 0 0 1px 7px;
`;

const MenuButton = styled.button`
  color: #000;
  font-size: ${(p) => (p.$small ? 11 : 12)}px;
  text-align: left;
  white-space: nowrap;
`;

const ControlRow = styled.section`
  display: flex;
  align-items: center;
  flex: none;
  height: 48px;
  padding: 0 1px 0 3px;
  border: 1px solid #555;
  border-bottom-color: #777;
`;

const VerticalGrip = styled.div`
  width: 4px;
  height: 36px;
  margin-right: 11px;
  background: repeating-conic-gradient(#888 0 25%, #c8c8c8 0 50%) 0 0 / 2px 2px;
`;

const FieldGrid = styled.div`
  display: grid;
  grid-template-columns: ${(p) => p.$label}px auto;
  row-gap: 4px;
  align-items: center;
  margin-left: ${(p) => p.$gap}px;
  font-size: 11px;
  label {
    white-space: nowrap;
  }
`;

const FieldBox = styled.div`
  display: flex;
  width: ${(p) => p.$width}px;
  height: 17px;
  border: 1px solid;
  border-color: #111 #fff #fff #111;
  background: ${(p) => (p.$light ? "#fff" : "#c0c0c0")};
  box-shadow: inset 0 1px 0 #555;
  input {
    flex: 1;
    min-width: 0;
    padding-left: 1px;
    color: #000;
    font-size: 10px;
    line-height: 14px;
  }
`;

const SpinnerBox = styled.span`
  display: flex;
  flex-direction: column;
  width: 14px;
  border-right: 1px solid #222;
  background: #c0c0c0;
  button {
    display: flex;
    align-items: center;
    justify-content: center;
    flex: 1;
    min-height: 0;
    border-top: 1px solid #222;
    overflow: hidden;
  }
`;

const DropButton = styled.button`
  ${raised}
  display: flex;
  align-items: center;
  justify-content: center;
  flex: none;
  width: 15px;
  height: 100%;
`;

const PlainButton = styled.button`
  margin-left: ${(p) => p.$gap}px;
`;

const Divider = styled.span`
  flex: none;
  width: 2px;
  height: 37px;
  margin-left: ${(p) => (p.$tight ? 3 : 6)}px;
  border-left: 1px solid #777;
  border-right: 1px solid #eee;
`;

const ChainToggle = styled.button`
  display: flex;
  align-items: center;
  justify-content: center;
  width: 16px;
  height: 22px;
  margin-left: 5px;
  border: 1px solid;
  border-color: #777 #fff #fff #777;
  background: #f4f4f4;
`;

const IconGrid = styled.div`
  display: grid;
  grid-template-columns: 15px 15px;
  gap: 7px 9px;
  margin-left: 6px;
`;

const ParagraphMark = styled.div`
  margin-left: 8px;
`;

const StrokeStack = styled.div`
  display: grid;
  gap: 4px;
  margin-left: 5px;
`;

const StrokeStyle = styled.div`
  display: flex;
  width: 81px;
  height: 17px;
  border: 1px solid;
  border-color: #111 #fff #fff #111;
  background: #fff;
`;

const StrokePreview = styled.span`
  flex: 1;
  margin: 4px 5px 3px 3px;
  background: #000;
`;

const EffectStack = styled.div`
  display: grid;
  gap: 4px;
  margin-left: 4px;
`;

const EffectRow = styled.div`
  display: flex;
  align-items: center;
  gap: ${(p) => p.$gap}px;
  height: 17px;
`;

const OpacityField = styled.div`
  display: flex;
  width: 50px;
  height: 17px;
  border: 1px solid #111;
  background: #fff;
  input {
    flex: 1;
    min-width: 0;
    font-size: 10px;
    line-height: 14px;
  }
`;

const Workspace = styled.main`
  display: grid;
  grid-template-columns: 33px 1fr 143px;
  flex: 1;
  min-height: 0;
`;

const DarkHeader = styled.div`
  display: flex;
  align-items: center;
  justify-content: ${(p) => (p.$right ? "flex-end" : "flex-start")};
  flex: none;
  height: 12px;
  padding: 0 3px;
  border-bottom: 1px solid #111;
  background: linear-gradient(#585858, #3c3c3c);
`;

const ToolColumn = styled.aside`
  display: flex;
  flex-direction: column;
  border-right: 1px solid #333;
  background: #5a5a5a;
`;

const ToolPanel = styled.div`
  display: flex;
  flex-direction: column;
  background: #c0c0c0;
`;

const ToolGrip = styled.div`
  height: 4px;
  margin: 4px 4px 9px 5px;
  background: repeating-conic-gradient(#888 0 25%, #c8c8c8 0 50%) 0 0 / 2px 2px;
`;

const ToolGroup = styled.div`
  display: flex;
  flex-direction: column;
  align-items: center;
  padding: 2px 0;
  & + & {
    border-top: 1px solid #999;
    box-shadow: inset 0 1px 0 #f4f4f4;
    padding: 2px 0 4px;
  }
`;

const ToolButton = styled.button`
  display: flex;
  align-items: center;
  justify-content: center;
  width: 25px;
  height: 21px;
  border: 1px solid transparent;
  ${(p) =>
    p.$active &&
    css`
      border-color: #666 #fff #fff #666;
      background: #fff;
    `}
`;

const FormatRow = styled.div`
  display: flex;
  align-items: center;
  justify-content: space-between;
  width: 20px;
  height: 9px;
  b {
    font-family: "Liberation Serif", serif;
    font-size: 10px;
    line-height: 9px;
  }
`;

const DocumentArea = styled.section`
  display: flex;
  flex-direction: column;
  min-width: 0;
`;

const TabBar = styled.div`
  display: flex;
  flex: none;
  height: 20px;
  border-bottom: 1px solid #444;
  background: linear-gradient(#939393, #757575);
`;

const Tab = styled.div`
  display: flex;
  align-items: center;
  justify-content: space-between;
  width: 153px;
  padding: 0 7px 0 8px;
  border-right: 1px solid #555;
  background: #c4c4c4;
  color: #222;
  font-size: 10px;
  white-space: nowrap;
`;

const EditorGrid = styled.div`
  display: grid;
  grid-template-columns: 16px 1fr 15px;
  grid-template-rows: 16px 1fr;
  flex: 1;
  min-height: 0;
`;

const ruler = css`
  background: #fff;
  overflow: hidden;
  text {
    fill: #000;
    font-size: 10px;
  }
`;

const RulerCorner = styled.div`
  border-right: 1px solid #000;
  border-bottom: 1px solid #000;
  background: #fff;
`;

const RulerTop = styled.div`
  ${ruler}
  border-bottom: 1px solid #000;
`;

const RulerSide = styled.div`
  ${ruler}
  border-right: 1px solid #000;
`;

const Pasteboard = styled.div`
  min-width: 0;
  background: #fff;
  overflow: hidden;
`;

const SlugGuides = styled.div`
  width: 596px;
  height: 100%;
  margin-left: 208px;
  padding: 9px 16px;
  border: solid #7fb4bd;
  border-width: 0 1px;
`;

const BleedFrame = styled.div`
  height: 768px;
  padding: 29px;
  border: 1px solid #d0607a;
`;

const Page = styled.div`
  height: 708px;
  padding: 11px;
  border: 1px solid #000;
  box-shadow: 2px 2px 0 #000;
`;

const MarginFrame = styled.div`
  height: 100%;
  border: 1px solid;
  border-color: #a49ad0 #b688c4;
`;

const ScrollButton = styled.button`
  ${raised}
  display: flex;
  align-items: center;
  justify-content: center;
  flex: none;
  width: 15px;
  height: ${(p) => (p.$fill ? "100%" : "15px")};
`;

const VScroll = styled.div`
  display: flex;
  flex-direction: column;
`;

const VTrack = styled.div`
  ${checker}
  flex: 1;
  padding-top: 56px;
`;

const HTrack = styled.div`
  ${checker}
  flex: 1;
  padding-left: 115px;
`;

const Thumb = styled.div`
  ${raised}
  width: ${(p) => (p.$vertical ? "15px" : "472px")};
  height: ${(p) => (p.$vertical ? "635px" : "100%")};
`;

const StatusRow = styled.footer`
  display: flex;
  align-items: stretch;
  flex: none;
  height: 14px;
  background: #c0c0c0;
  border-bottom: 1px solid #555;
`;

const StepButton = styled.button`
  display: flex;
  align-items: center;
  justify-content: center;
  width: 15px;
`;

const PageField = styled.div`
  display: flex;
  width: 97px;
  margin-right: 2px;
  background: #fff;
  input {
    flex: 1;
    min-width: 0;
    font-size: 10px;
    line-height: 12px;
  }
`;

const Preflight = styled.div`
  display: flex;
  align-items: center;
  gap: 3px;
  width: 98px;
  padding-left: 4px;
  font-size: 10px;
  line-height: 12px;
  i {
    width: 11px;
    height: 11px;
    border-radius: 50%;
    background: radial-gradient(circle at 4px 4px, #7be04a, #1c9a10 70%);
  }
`;

const StatusCell = styled.button`
  display: flex;
  align-items: center;
  justify-content: center;
  width: ${(p) => p.$width}px;
  border-left: 1px solid #777;
  box-shadow: inset 1px 0 0 #eee;
`;

const ResizeGrip = styled.div`
  display: flex;
  align-items: flex-end;
  justify-content: flex-end;
  width: 15px;
  border-top: 1px solid #222;
  border-left: 1px solid #222;
`;

const Dock = styled.aside`
  display: flex;
  flex-direction: column;
  border-left: 1px solid #222;
`;

const DockBody = styled.div`
  display: flex;
  flex: 1;
  min-height: 0;
`;

const PanelList = styled.div`
  display: flex;
  flex-direction: column;
  flex: 1;
  border-bottom: 1px solid #555;
`;

const PanelGrip = styled.div`
  height: 4px;
  margin: 3px 4px 3px 4px;
  background: repeating-conic-gradient(#888 0 25%, #c8c8c8 0 50%) 0 0 / 2px 2px;
`;

const PanelRow = styled.button`
  display: flex;
  align-items: center;
  gap: 8px;
  height: 30px;
  padding-left: 9px;
  color: #222;
  font-family: "Noto Sans CJK JP", sans-serif;
  font-size: ${(p) => (p.$small ? 11 : 12)}px;
  text-align: left;
  white-space: nowrap;
`;

const DockScroll = styled.div`
  width: 7px;
  background: #555;
  span {
    display: block;
    height: 607px;
    border: solid #555;
    border-width: 0 1px;
    background: linear-gradient(90deg, #fff, #c0c0c0);
  }
`;

export default App;
